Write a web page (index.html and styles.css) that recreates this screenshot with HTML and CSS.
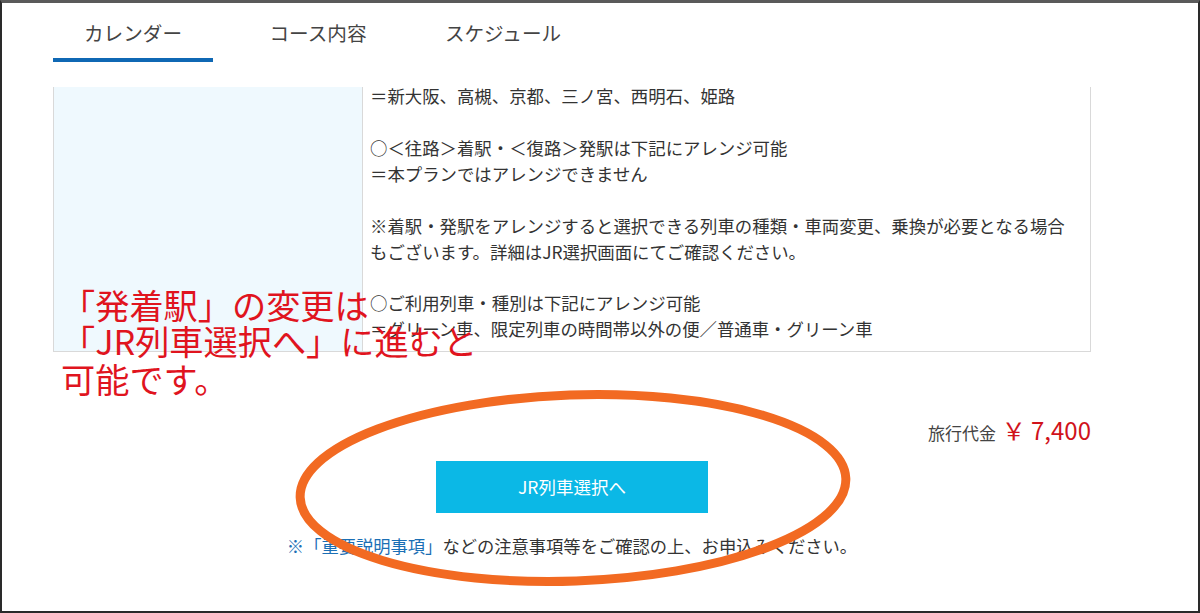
FILE: index.html
```html
<!DOCTYPE html>
<html lang="ja">
<head>
<meta charset="utf-8">
<title>JR列車選択</title>
<link rel="stylesheet" href="styles.css">
</head>
<body>
<div class="frame">
  <nav class="tabs">
    <div class="tab active">カレンダー</div>
    <div class="tab">コース内容</div>
    <div class="tab">スケジュール</div>
  </nav>

  <div class="detail">
    <div class="detail-side"></div>
    <div class="detail-body">
      <p class="first">＝新大阪、高槻、京都、三ノ宮、西明石、姫路</p>
      <p class="blank">&nbsp;</p>
      <p>○＜往路＞着駅・＜復路＞発駅は下記にアレンジ可能</p>
      <p>＝本プランではアレンジできません</p>
      <p class="blank">&nbsp;</p>
      <p>※着駅・発駅をアレンジすると選択できる列車の種類・車両変更、乗換が必要となる場合</p>
      <p>もございます。詳細はJR選択画面にてご確認ください。</p>
      <p class="blank">&nbsp;</p>
      <p>○ご利用列車・種別は下記にアレンジ可能</p>
      <p>＝グリーン車、限定列車の時間帯以外の便／普通車・グリーン車</p>
    </div>
  </div>

  <div class="price">
    <span class="price-label">旅行代金</span>
    <span class="price-value">￥ 7,400</span>
  </div>

  <div class="action">
    <a class="btn">JR列車選択へ</a>
  </div>

  <p class="note"><a class="note-link">※「重要説明事項」</a>などの注意事項等をご確認の上、お申込みください。</p>

  <div class="annotation">
    <div>「発着駅」の変更は</div>
    <div>「JR列車選択へ」に進むと</div>
    <div class="annotation-last">可能です。</div>
  </div>

  <svg class="circle" width="1200" height="613" viewBox="0 0 1200 613">
    <ellipse cx="573" cy="488" rx="273" ry="93" fill="none" stroke="#f26a22" stroke-width="9" transform="rotate(-2 573 488)"/>
  </svg>
</div>
</body>
</html>
```

FILE: styles.css
```css
* {
  box-sizing: border-box;
}

html, body {
  margin: 0;
  padding: 0;
  background: #ffffff;
}

.frame {
  position: relative;
  width: 1200px;
  height: 613px;
  border: 2px solid #2a2a2a;
  border-top: 3px solid #5a5a5a;
  padding-left: 51px;
  overflow: hidden;
  font-family: "Noto Sans CJK JP", "Noto Sans", sans-serif;
  color: #333333;
}

.tabs {
  display: flex;
  gap: 25px;
  height: 59px;
}

.tab {
  width: 160px;
  text-align: center;
  font-size: 19.6px;
  line-height: 24px;
  padding-top: 18px;
  color: #444444;
  border-bottom: 4px solid transparent;
}

.tab.active {
  border-bottom-color: #0f68b4;
}

.detail {
  display: flex;
  width: 1038px;
  height: 265px;
  margin-top: 25px;
  border: 1px solid #d9d9d9;
  border-top: none;
  overflow: hidden;
}

.detail-side {
  width: 309px;
  flex: none;
  background: #eff9fe;
  border-right: 1px solid #d9d9d9;
}

.detail-body {
  flex: 1;
  padding: 0 8px 0 7px;
  font-size: 17.4px;
  line-height: 25.9px;
  color: #333333;
}

.detail-body p {
  margin: 0;
  white-space: nowrap;
}

.detail-body p.first {
  line-height: 18px;
  margin-bottom: 4px;
}

.price {
  width: 1038px;
  margin-top: 63px;
  text-align: right;
  line-height: 30px;
  height: 30px;
}

.price-label {
  font-size: 17px;
  color: #444444;
}

.price-value {
  font-size: 24px;
  color: #d0121b;
  margin-left: 2px;
}

.action {
  width: 1038px;
  display: flex;
  justify-content: center;
  margin-top: 16px;
}

.btn {
  display: block;
  width: 272px;
  height: 52px;
  line-height: 52px;
  text-align: center;
  background: #0bb8e6;
  color: #ffffff;
  font-size: 17.5px;
}

.note {
  width: 1038px;
  margin: 22px 0 0;
  text-align: center;
  font-size: 17.3px;
  line-height: 22px;
  color: #333333;
}

.note-link {
  color: #1b6fb5;
}

.annotation {
  position: absolute;
  left: 59px;
  top: 283px;
  font-size: 34.2px;
  line-height: 36px;
  color: #e0141e;
  white-space: nowrap;
}

.annotation-last {
  margin-top: 2px;
}

.circle {
  position: absolute;
  left: -2px;
  top: -3px;
  pointer-events: none;
}
```
